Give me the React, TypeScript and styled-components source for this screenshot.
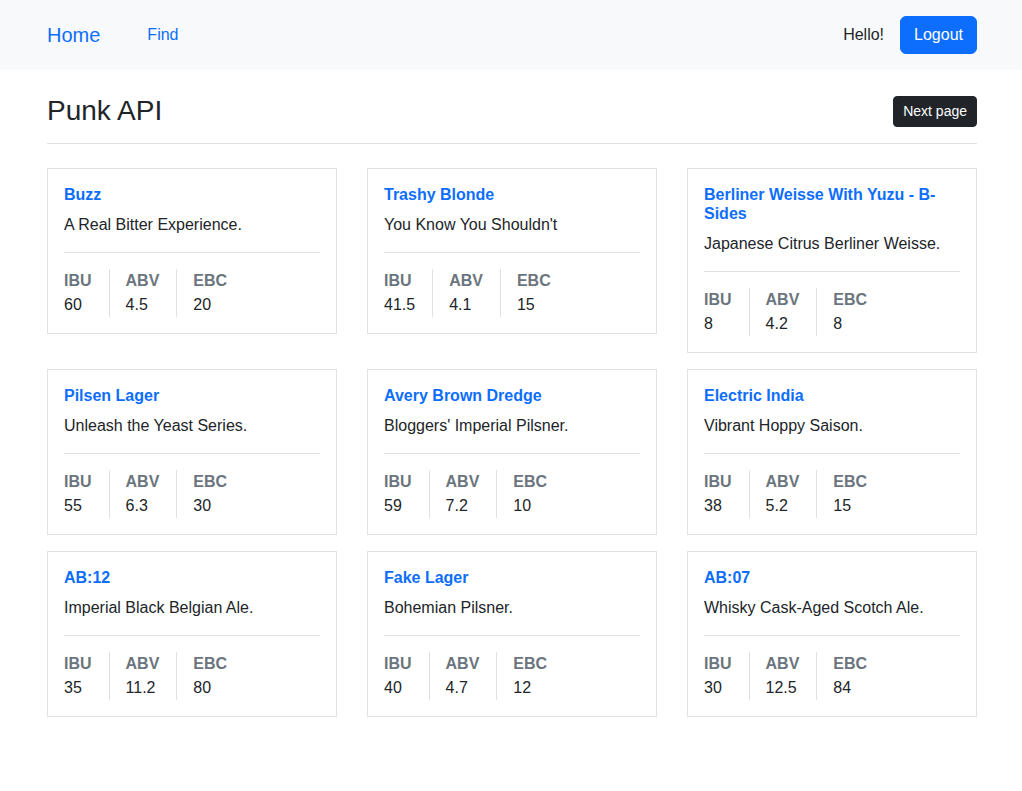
import React from "react";
import styled, { createGlobalStyle } from "styled-components";

const Global = createGlobalStyle`
  * { box-sizing: border-box; }
  body {
    margin: 0;
    font-family: "Liberation Sans", Arial, sans-serif;
    font-size: 16px;
    line-height: 1.5;
    color: #212529;
    background: #fff;
  }
`;

const Nav = styled.nav`
  background: #f8f9fa;
  height: 70px;
`;

const Container = styled.div`
  width: 932px;
  padding-left: 2px;
  margin: 0 auto;
`;

const NavInner = styled(Container)`
  height: 100%;
  display: flex;
  align-items: center;
  padding-bottom: 1px;
`;

const Brand = styled.a`
  font-size: 20px;
  color: #0d6efd;
  text-decoration: none;
  margin-right: 47px;
`;

const NavLink = styled.a`
  font-size: 16px;
  color: #0d6efd;
  text-decoration: none;
`;

const Spacer = styled.div`
  flex: 1;
`;

const Hello = styled.span`
  margin-right: 16px;
`;

const Button = styled.button<{ $variant: "primary" | "dark"; $small?: boolean }>`
  font-family: inherit;
  border: 1px solid ${(p) => (p.$variant === "primary" ? "#0d6efd" : "#212529")};
  background: ${(p) => (p.$variant === "primary" ? "#0d6efd" : "#212529")};
  color: #fff;
  font-size: ${(p) => (p.$small ? "14px" : "16px")};
  line-height: 1.5;
  padding: ${(p) => (p.$small ? "4px 9px" : "6px 13px")};
  border-radius: ${(p) => (p.$small ? "4px" : "6px")};
  cursor: pointer;
`;

const Header = styled.div`
  margin-top: 24px;
  padding-bottom: 15px;
  border-bottom: 1px solid #dee2e6;
  display: flex;
  align-items: center;
  justify-content: space-between;
`;

const Title = styled.h1`
  margin: 0;
  font-size: 28px;
  font-weight: 500;
  line-height: 34px;
`;

const Grid = styled.div`
  margin-top: 24px;
  display: grid;
  grid-template-columns: repeat(3, 1fr);
  column-gap: 30px;
  row-gap: 16px;
  align-items: start;
`;

const Card = styled.div`
  border: 1px solid #dee2e6;
  padding: 16px;
`;

const CardTitle = styled.a`
  display: block;
  color: #0d6efd;
  font-weight: 700;
  font-size: 16px;
  line-height: 19px;
  text-decoration: none;
  margin-bottom: 9px;
`;

const Tagline = styled.p`
  margin: 0 0 15px;
`;

const Rule = styled.hr`
  margin: 0 0 16px;
  border: 0;
  border-top: 1px solid #dee2e6;
`;

const Stats = styled.div`
  display: flex;
`;

const Stat = styled.div`
  padding: 0 17px 0 16px;
  border-right: 1px solid #dee2e6;
  &:first-child { padding-left: 0; }
  &:last-child { border-right: 0; }
`;

const Label = styled.div`
  font-weight: 700;
  color: #6c757d;
`;

const Value = styled.div``;

const beers = [
  { name: "Buzz", tagline: "A Real Bitter Experience.", ibu: "60", abv: "4.5", ebc: "20" },
  { name: "Trashy Blonde", tagline: "You Know You Shouldn't", ibu: "41.5", abv: "4.1", ebc: "15" },
  { name: "Berliner Weisse With Yuzu - B-Sides", tagline: "Japanese Citrus Berliner Weisse.", ibu: "8", abv: "4.2", ebc: "8" },
  { name: "Pilsen Lager", tagline: "Unleash the Yeast Series.", ibu: "55", abv: "6.3", ebc: "30" },
  { name: "Avery Brown Dredge", tagline: "Bloggers' Imperial Pilsner.", ibu: "59", abv: "7.2", ebc: "10" },
  { name: "Electric India", tagline: "Vibrant Hoppy Saison.", ibu: "38", abv: "5.2", ebc: "15" },
  { name: "AB:12", tagline: "Imperial Black Belgian Ale.", ibu: "35", abv: "11.2", ebc: "80" },
  { name: "Fake Lager", tagline: "Bohemian Pilsner.", ibu: "40", abv: "4.7", ebc: "12" },
  { name: "AB:07", tagline: "Whisky Cask-Aged Scotch Ale.", ibu: "30", abv: "12.5", ebc: "84" },
];

export default function App() {
  return (
    <>
      <Global />
      <Nav>
        <NavInner>
          <Brand href="#">Home</Brand>
          <NavLink href="#">Find</NavLink>
          <Spacer />
          <Hello>Hello!</Hello>
          <Button $variant="primary">Logout</Button>
        </NavInner>
      </Nav>
      <Container>
        <Header>
          <Title>Punk API</Title>
          <Button $variant="dark" $small>Next page</Button>
        </Header>
        <Grid>
          {beers.map((b) => (
            <Card key={b.name}>
              <CardTitle href="#">{b.name}</CardTitle>
              <Tagline>{b.tagline}</Tagline>
              <Rule />
              <Stats>
                <Stat><Label>IBU</Label><Value>{b.ibu}</Value></Stat>
                <Stat><Label>ABV</Label><Value>{b.abv}</Value></Stat>
                <Stat><Label>EBC</Label><Value>{b.ebc}</Value></Stat>
              </Stats>
            </Card>
          ))}
        </Grid>
      </Container>
    </>
  );
}
